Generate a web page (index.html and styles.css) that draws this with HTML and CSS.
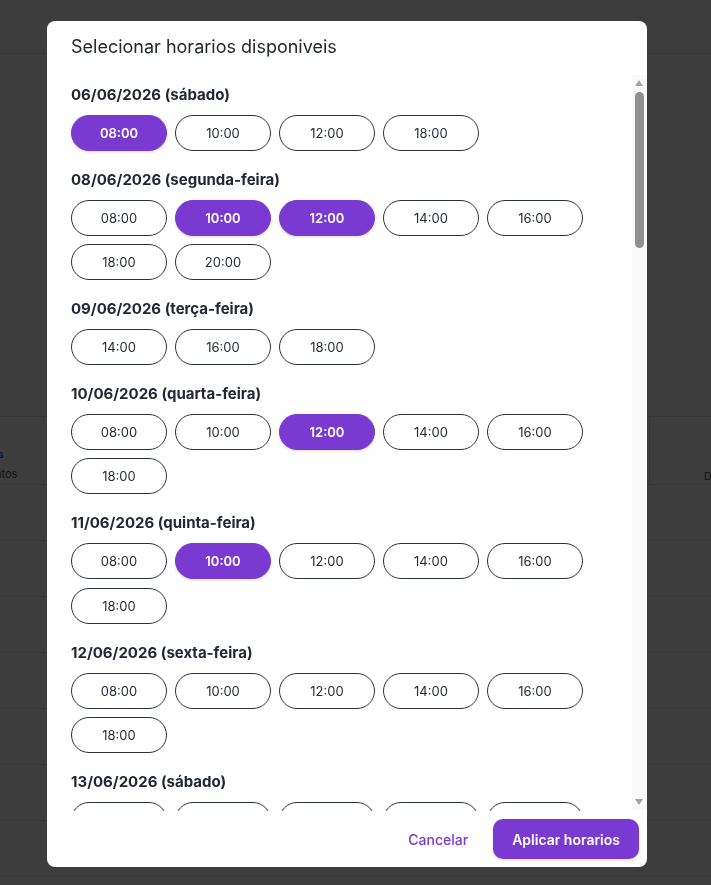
FILE: index.html
```html
<!DOCTYPE html>
<html lang="pt-BR">
<head>
<meta charset="utf-8">
<title>Selecionar horarios</title>
<link rel="stylesheet" href="styles.css">
</head>
<body>
<div class="page">
  <div class="topbar"></div>
  <div class="spacer"></div>
  <div class="stats">
    <div class="stat"><span class="stat-num">Ver todos</span><span class="stat-label">Agendamentos</span></div>
    <div class="stat stat-right"><span class="stat-label">D</span></div>
  </div>
  <div class="row"></div>
  <div class="row"></div>
  <div class="row"></div>
  <div class="row"></div>
  <div class="row"></div>
  <div class="row"></div>
  <div class="row"></div>
</div>

<div class="overlay">
  <div class="modal">
    <div class="modal-header">Selecionar horarios disponiveis</div>
    <div class="modal-body">
      <div class="day">
        <div class="day-title">06/06/2026 (sábado)</div>
        <div class="slots">
          <button class="slot selected">08:00</button><button class="slot">10:00</button><button class="slot">12:00</button><button class="slot">18:00</button>
        </div>
      </div>
      <div class="day">
        <div class="day-title">08/06/2026 (segunda-feira)</div>
        <div class="slots">
          <button class="slot">08:00</button><button class="slot selected">10:00</button><button class="slot selected">12:00</button><button class="slot">14:00</button><button class="slot">16:00</button><button class="slot">18:00</button><button class="slot">20:00</button>
        </div>
      </div>
      <div class="day">
        <div class="day-title">09/06/2026 (terça-feira)</div>
        <div class="slots">
          <button class="slot">14:00</button><button class="slot">16:00</button><button class="slot">18:00</button>
        </div>
      </div>
      <div class="day">
        <div class="day-title">10/06/2026 (quarta-feira)</div>
        <div class="slots">
          <button class="slot">08:00</button><button class="slot">10:00</button><button class="slot selected">12:00</button><button class="slot">14:00</button><button class="slot">16:00</button><button class="slot">18:00</button>
        </div>
      </div>
      <div class="day">
        <div class="day-title">11/06/2026 (quinta-feira)</div>
        <div class="slots">
          <button class="slot">08:00</button><button class="slot selected">10:00</button><button class="slot">12:00</button><button class="slot">14:00</button><button class="slot">16:00</button><button class="slot">18:00</button>
        </div>
      </div>
      <div class="day">
        <div class="day-title">12/06/2026 (sexta-feira)</div>
        <div class="slots">
          <button class="slot">08:00</button><button class="slot">10:00</button><button class="slot">12:00</button><button class="slot">14:00</button><button class="slot">16:00</button><button class="slot">18:00</button>
        </div>
      </div>
      <div class="day">
        <div class="day-title">13/06/2026 (sábado)</div>
        <div class="slots">
          <button class="slot">08:00</button><button class="slot">10:00</button><button class="slot">12:00</button><button class="slot">14:00</button><button class="slot">16:00</button>
        </div>
      </div>
    </div>
    <div class="scrollbar" aria-hidden="true">
      <span class="sb-arrow sb-up"></span>
      <span class="sb-thumb"></span>
      <span class="sb-arrow sb-down"></span>
    </div>
    <div class="modal-footer">
      <button class="btn-text">Cancelar</button>
      <button class="btn-primary">Aplicar horarios</button>
    </div>
  </div>
</div>
</body>
</html>
```

FILE: styles.css
```css
* { box-sizing: border-box; }

html, body {
  margin: 0;
  padding: 0;
  height: 100%;
  overflow: hidden;
}

body {
  font-family: Inter, "Noto Sans", "Liberation Sans", sans-serif;
  background: #ffffff;
  color: #1f2433;
}

/* background page (under the overlay) */
.page {
  display: flex;
  flex-direction: column;
}
.topbar {
  height: 54px;
  border-bottom: 1px solid #e3e3e3;
}
.spacer {
  height: 363px;
  border-bottom: 1px solid #e3e3e3;
}
.stats {
  height: 68px;
  display: flex;
  justify-content: space-between;
  border-bottom: 1px solid #e3e3e3;
}
.stat {
  display: flex;
  flex-direction: column;
  align-items: center;
  width: 80px;
  margin-left: -62px;
  padding-top: 29px;
}
.stat-right {
  width: 62px;
  margin-left: 0;
  margin-right: 0;
  border-left: 1px solid #e3e3e3;
  padding-left: 54px;
  align-items: flex-start;
  padding-top: 51px;
}
.stat-num {
  font-size: 11px;
  font-weight: 600;
  color: #2563eb;
  line-height: 16px;
}
.stat-label {
  font-size: 11px;
  color: #555;
  line-height: 16px;
  margin-top: 4px;
}
.stat-right .stat-label { margin-top: 0; }
.row {
  height: 56px;
  border-bottom: 1px solid #e3e3e3;
}

/* overlay + modal */
.overlay {
  position: fixed;
  inset: 0;
  background: rgba(0, 0, 0, 0.76);
}
.modal {
  position: absolute;
  top: 21px;
  left: 47px;
  width: 600px;
  height: 846px;
  background: #ffffff;
  border-radius: 8px;
  display: flex;
  flex-direction: column;
  overflow: hidden;
}
.modal-header {
  padding: 14px 24px 16px;
  font-size: 18px;
  line-height: 24px;
  font-weight: 400;
  color: #232734;
  flex: none;
}
.modal-body {
  flex: 1;
  min-height: 0;
  overflow: hidden;
  padding: 10px 39px 10px 24px;
  display: flex;
  flex-direction: column;
  gap: 18.7px;
}
.day {
  display: flex;
  flex-direction: column;
  gap: 10px;
  flex: none;
}
.day-title {
  font-size: 15px;
  line-height: 20px;
  font-weight: 700;
  color: #232734;
}
.slots {
  display: flex;
  flex-wrap: wrap;
  column-gap: 8px;
  row-gap: 8.7px;
}
.slot {
  width: 96px;
  height: 36px;
  border: 1px solid #2c3140;
  border-radius: 999px;
  background: #ffffff;
  font-family: Inter, "Noto Sans", "Liberation Sans", sans-serif;
  font-size: 13px;
  font-weight: 400;
  color: #262b38;
  padding: 0;
  cursor: pointer;
}
.slot.selected {
  background: #7a39d1;
  border-color: #7a39d1;
  color: #ffffff;
  font-weight: 600;
  box-shadow: 0 1px 3px rgba(0, 0, 0, 0.14);
}

/* drawn scrollbar (sits over the list's right edge) */
.scrollbar {
  position: absolute;
  top: 54px;
  right: 0;
  width: 15px;
  height: 735px;
  background: #f9f9f9;
}
.sb-arrow {
  position: absolute;
  left: 3px;
  width: 0;
  height: 0;
  border-left: 4.5px solid transparent;
  border-right: 4.5px solid transparent;
}
.sb-up {
  top: 5px;
  border-bottom: 6px solid #a3a3a3;
}
.sb-down {
  bottom: 5px;
  border-top: 6px solid #a3a3a3;
}
.sb-thumb {
  position: absolute;
  top: 17px;
  left: 3px;
  width: 9px;
  height: 156px;
  border-radius: 4.5px;
  background: #909090;
}

.modal-footer {
  flex: none;
  display: flex;
  justify-content: flex-end;
  align-items: center;
  gap: 9px;
  padding: 8px;
}
.btn-text {
  height: 40px;
  padding: 0 16px;
  border: none;
  background: transparent;
  color: #7a39d1;
  font-family: Inter, "Noto Sans", "Liberation Sans", sans-serif;
  font-size: 14px;
  font-weight: 500;
}
.btn-primary {
  height: 40px;
  padding: 0 19px;
  border: none;
  border-radius: 10px;
  background: #7a39d1;
  color: #ffffff;
  font-family: Inter, "Noto Sans", "Liberation Sans", sans-serif;
  font-size: 14px;
  font-weight: 600;
  box-shadow: 0 1px 3px rgba(0, 0, 0, 0.15);
}
```
